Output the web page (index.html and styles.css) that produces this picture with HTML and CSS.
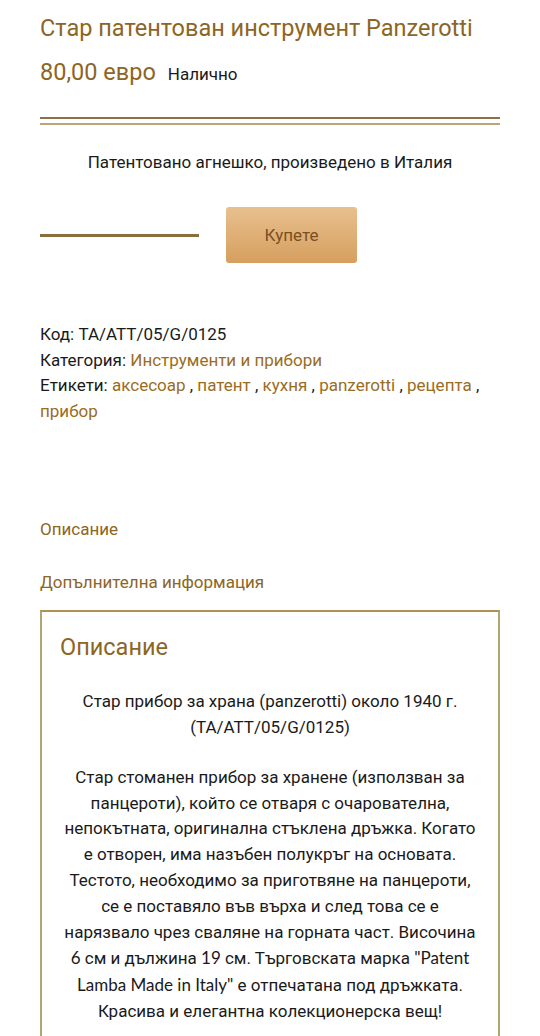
FILE: index.html
```html
<!DOCTYPE html>
<html lang="bg">
<head>
<meta charset="utf-8">
<title>Стар патентован инструмент Panzerotti</title>
<link rel="stylesheet" href="styles.css">
</head>
<body>
<div class="page">
  <h1 class="title">Стар патентован инструмент Panzerotti</h1>
  <div class="price-row">
    <span class="price">80,00 евро</span>
    <span class="stock">Налично</span>
  </div>
  <div class="rule rule-dark"></div>
  <div class="rule rule-light"></div>
  <p class="short">Патентовано агнешко, произведено в Италия</p>
  <div class="cart">
    <div class="qty"></div>
    <button class="buy">Купете</button>
  </div>
  <div class="meta">
    <div>Код: TA/ATT/05/G/0125</div>
    <div>Категория: <a class="link">Инструменти и прибори</a></div>
    <div>Етикети: <a class="link">аксесоар</a> , <a class="link">патент</a> , <a class="link">кухня</a> , <a class="link">panzerotti</a> , <a class="link">рецепта</a> , <a class="link">прибор</a></div>
  </div>
  <div class="tabs">
    <a class="tab">Описание</a>
    <a class="tab">Допълнителна информация</a>
  </div>
  <div class="panel">
    <h2 class="panel-title">Описание</h2>
    <p class="desc">Стар прибор за храна (panzerotti) около 1940 г. (TA/ATT/05/G/0125)</p>
    <p class="desc desc-alt">Стар стоманен прибор за хранене (използван за панцероти), който се отваря с очарователна, непокътната, оригинална стъклена дръжка. Когато е отворен, има назъбен полукръг на основата. Тестото, необходимо за приготвяне на панцероти, се е поставяло във върха и след това се е нарязвало чрез сваляне на горната част. Височина <span class="lat">6</span> см и дължина <span class="lat">19</span> см. Търговската марка <span class="lat">"Patent</span> <span class="lat">Lamba Made in Italy"</span> е отпечатана под дръжката. <span class="sentence">Красива и елегантна колекционерска вещ!</span></p>
  </div>
</div>
</body>
</html>
```
FILE: styles.css
```css
html, body {
  margin: 0;
  padding: 0;
  background: #ffffff;
}
body {
  font-family: Roboto, "Noto Sans", sans-serif;
  color: #1a1a1a;
  font-size: 17px;
}
.page {
  padding: 12px 40px 0 40px;
}
.title {
  margin: 0;
  font-size: 23.5px;
  font-weight: 400;
  line-height: 32px;
  color: #8d6524;
}
.price-row {
  display: flex;
  align-items: baseline;
  gap: 12px;
  margin-top: 12px;
}
.price {
  font-size: 23.5px;
  color: #8d6524;
  line-height: 32px;
}
.stock {
  font-size: 17px;
  color: #1a1a1a;
}
.rule {
  height: 2px;
}
.rule-dark {
  margin-top: 29px;
  background: #8f7045;
}
.rule-light {
  margin-top: 4px;
  background: #bca57d;
}
.short {
  margin: 25px 0 0 0;
  text-align: center;
  line-height: 24px;
}
.cart {
  display: flex;
  align-items: center;
  gap: 27px;
  margin-top: 33px;
}
.qty {
  width: 159px;
  height: 3px;
  background: #8a6f3e;
}
.buy {
  width: 131px;
  height: 56px;
  border: none;
  border-radius: 3px;
  background: linear-gradient(#e8c08e, #d69f5f);
  color: #7a4f22;
  font-family: Roboto, "Noto Sans", sans-serif;
  font-size: 17px;
  padding: 0;
}
.meta {
  margin-top: 59px;
  line-height: 25.7px;
}
.link {
  color: #9a6d22;
}
.tabs {
  margin-top: 92px;
  display: flex;
  flex-direction: column;
  gap: 29px;
}
.tab {
  color: #8d6524;
  line-height: 24px;
}
.panel {
  margin-top: 16px;
  border: 2px solid #b3a473;
  border-top-color: #a99553;
  padding: 19px 18px 20px 18px;
}
.panel-title {
  margin: 0;
  font-size: 23.5px;
  font-weight: 400;
  line-height: 32px;
  color: #8d6524;
}
.desc {
  margin: 25px 0 0 0;
  text-align: center;
  line-height: 26px;
}
.desc-alt {
  line-height: 25.8px;
}
.lat {
  font-family: Lato, Roboto, sans-serif;
}
.desc + .desc {
  margin-top: 25px;
}
```
